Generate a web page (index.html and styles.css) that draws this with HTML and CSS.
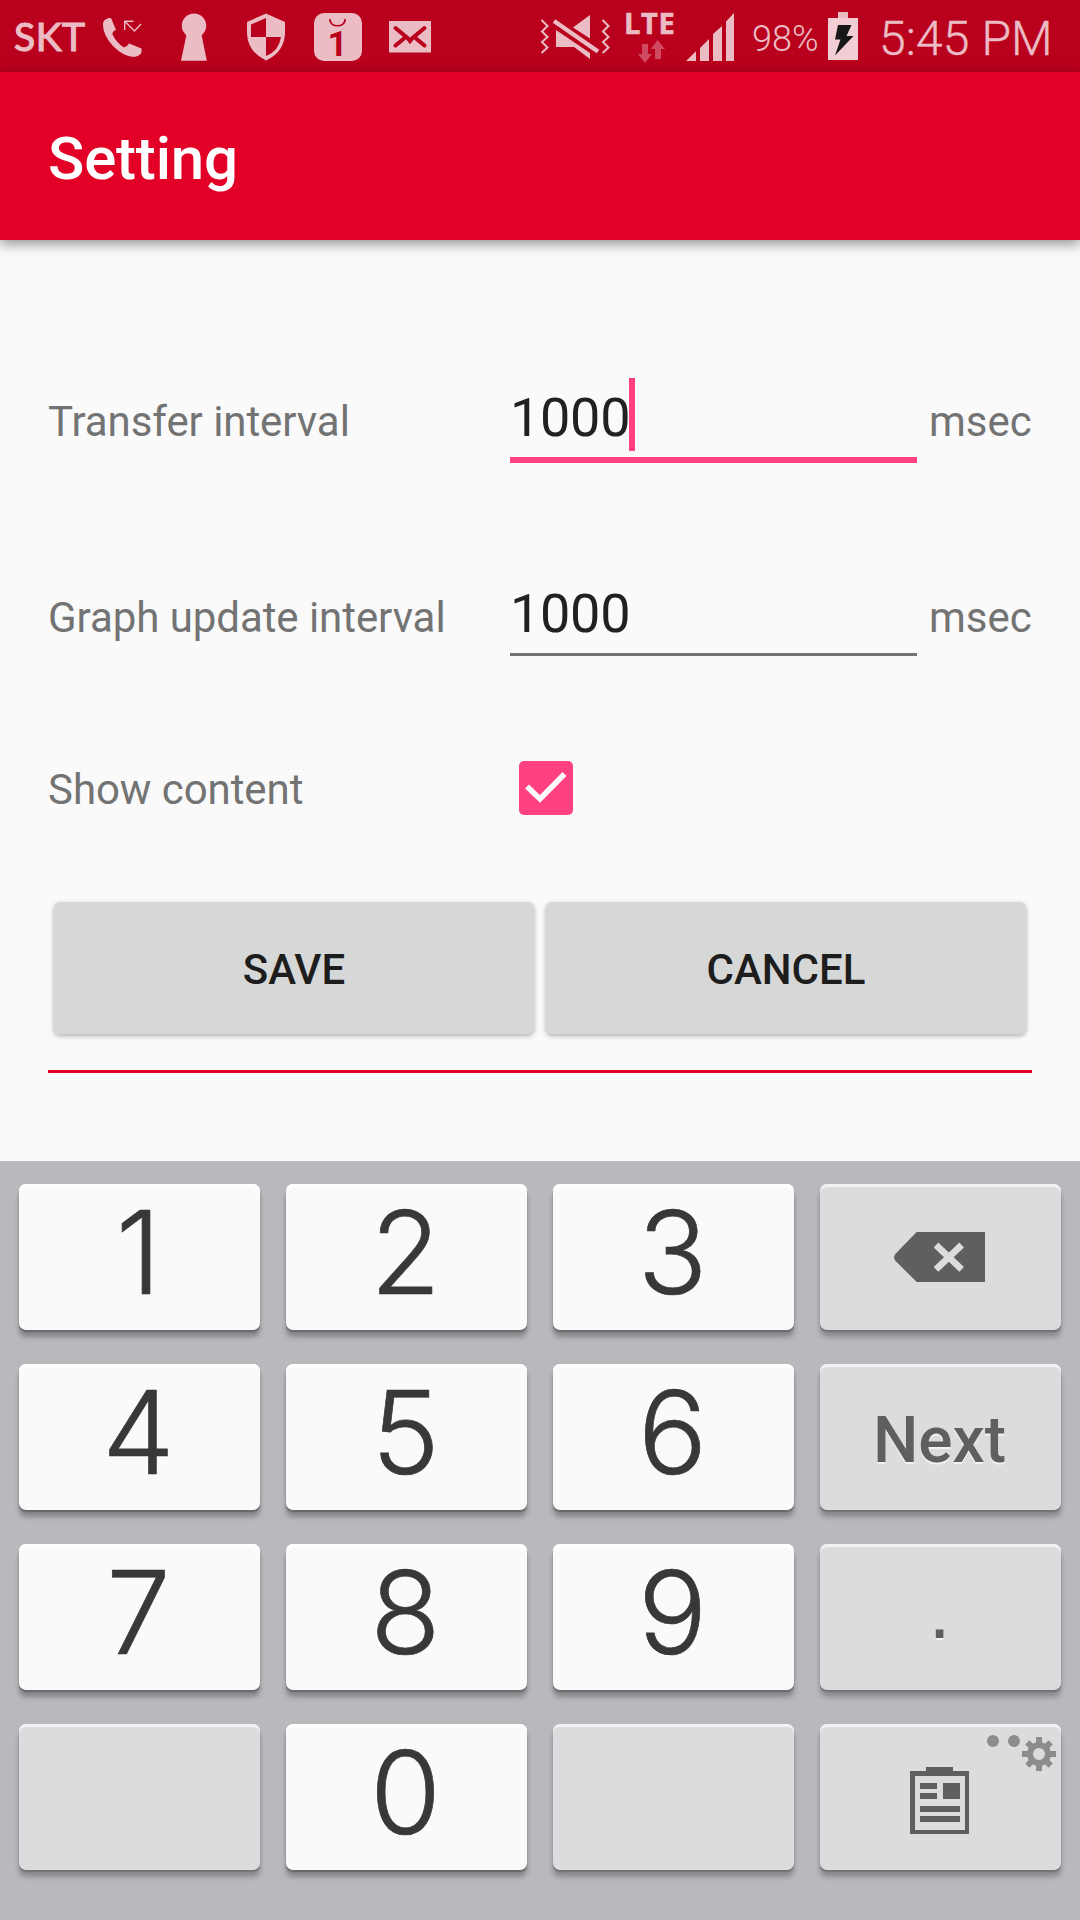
FILE: index.html
```html
<!DOCTYPE html>
<html lang="en">
<head>
<meta charset="utf-8">
<title>Setting</title>
<link rel="stylesheet" href="styles.css">
</head>
<body>
<div class="screen">
  <header class="status">
    <span class="carrier">SKT</span>
    <svg class="ic" width="60" height="72" viewBox="100 0 60 72"><path fill="currentColor" d="M103 25C103 20 106 18 111 18L116 30Q112 31 112.500 34.500Q117 43.500 124 47.500Q127 47 129 43.500L141.500 48.500Q143 56 134 57Q124 57 113 46Q103 35 103 25Z"/><path d="M133.500 21.200H124.700V30M125 21.500L134.500 31L141 24" fill="none" stroke="currentColor" stroke-width="1.400"/></svg>
    <svg class="ic" width="70" height="72" viewBox="160 0 70 72"><circle cx="194" cy="25.700" r="12.200" fill="currentColor"/><path d="M187 32H201L206.800 60.700H181Z" fill="currentColor"/></svg>
    <svg class="ic" width="70" height="72" viewBox="230 0 70 72"><path d="M266 13.500L285 22V34Q284 52 266 60.500Q248 52 247 34V22Z" fill="currentColor"/><path class="cut" d="M251 24.500L266 18V37H251Z M266 37H281Q279 51 266 56Z"/></svg>
    <svg class="ic" width="80" height="72" viewBox="300 0 80 72"><rect x="314" y="13" width="48" height="48" rx="10" fill="currentColor"/><path class="cutline" stroke-width="1.600" d="M330 19C329 28 346 28 345 19"/><text class="day" x="327.500" y="56">1</text></svg>
    <svg class="ic" width="60" height="72" viewBox="380 0 60 72"><path d="M389 21H431V52.500H389Z" fill="currentColor"/><path class="cutline" stroke-width="4" stroke-linecap="round" d="M395.500 28L408 38.500L410 41L412 38.500L424.500 28M395.500 45.500L404 38.500M424.500 45.500L416 38.500"/></svg>
    <svg class="ic mute" width="80" height="72" viewBox="535 0 80 72"><path fill="none" stroke="currentColor" stroke-width="2" d="M541.500 20L547.500 26L542 31.500L547.500 37L542 42L547.500 47.500L541.500 53M602.500 20L608.500 26L603 31.500L608.500 37L603 42L608.500 47.500L602.500 53"/><path fill="currentColor" d="M573 27.500L590 15V38.500ZM556 30L590 53V59L574 47H556Z"/><path stroke="currentColor" stroke-width="4.500" d="M554 21L598 51.500"/></svg>
    <div class="network">
      <span class="lte">LTE</span>
      <svg width="30" height="24" viewBox="636 39 30 24"><path d="M642 44H648V54H652L645 63L638 54H642ZM655 59V49H651L657.500 40L665 49H661V59Z" fill="#cf4a60"/></svg>
    </div>
    <svg class="ic" width="68" height="72" viewBox="682 0 68 72"><path fill="currentColor" d="M686 61L696 51.300V61ZM700 61V48L709 39V61ZM713 61V34L722 26V61ZM726 61V21.500L734 13V61Z"/></svg>
    <span class="percent">98%</span>
    <svg class="ic" width="55" height="72" viewBox="822 0 55 72"><path d="M838 12H848V18H838Z" fill="currentColor"/><path d="M828 18H858V60H828Z" fill="#f2ced4"/><path d="M838 25H851.500L846.500 36H853.500L835 55.500L840.500 39.500H835Z" fill="#171717"/></svg>
    <span class="clock">5:45 PM</span>
  </header>
  <div class="appbar"><h1 class="title">Setting</h1></div>
  <main class="form">
    <div class="row">
      <label class="label">Transfer interval</label>
      <div class="field focused"><span>1000</span><i class="caret"></i></div>
      <span class="unit">msec</span>
    </div>
    <div class="row">
      <label class="label">Graph update interval</label>
      <div class="field"><span>1000</span></div>
      <span class="unit">msec</span>
    </div>
    <div class="row check-row">
      <label class="label">Show content</label>
      <span class="checkbox"><svg width="54" height="54" viewBox="0 0 54 54"><path d="M8 25.500L21 38L45.500 13" fill="none" stroke="#fafafa" stroke-width="5.500"/></svg></span>
    </div>
    <div class="buttons">
      <button class="btn">SAVE</button>
      <button class="btn">CANCEL</button>
    </div>
    <hr class="rule">
  </main>
  <div class="keyboard">
    <div class="key"><span class="digit">1</span></div><div class="key"><span class="digit">2</span></div><div class="key"><span class="digit">3</span></div>
    <div class="key alt"><svg width="241" height="146" viewBox="0 0 723 438"><path d="M290 144H495V294H290L226 230Q219 220 226 210Z" fill="#5f5f5f"/><path d="M348 183L425 256M425 183L348 256" stroke="#dbdcde" stroke-width="20"/></svg></div>
    <div class="key"><span class="digit">4</span></div><div class="key"><span class="digit">5</span></div><div class="key"><span class="digit">6</span></div>
    <div class="key alt next">Next</div>
    <div class="key"><span class="digit">7</span></div><div class="key"><span class="digit">8</span></div><div class="key"><span class="digit">9</span></div>
    <div class="key alt dot">.</div>
    <div class="key alt"></div><div class="key"><span class="digit">0</span></div><div class="key alt"></div>
    <div class="key alt"><svg width="241" height="146" viewBox="0 0 723 438"><path fill="#5f5f5f" fill-rule="evenodd" d="M318 129H399V141H447V330H270V141H318ZM285 156V318H435V156Z"/><path fill="#5f5f5f" d="M300 177H351V195H300ZM300 207H351V225H300ZM369 177H420V225H369ZM300 246H420V264H300ZM300 276H420V294H300Z"/><g fill="#8c8c8c"><circle cx="519" cy="51" r="18"/><circle cx="582" cy="51" r="18"/></g><g transform="translate(657 90)" stroke="#8c8c8c" fill="none"><circle r="27" stroke-width="18"/><path stroke-width="18" d="M0-51V-30M0 51V30M-51 0H-30M51 0H30M-35-35L-22-22M35 35L22 22M-35 35L-22 22M35-35L22-22"/></g></svg></div>
  </div>
</div>
</body>
</html>
```
FILE: styles.css
```css
* { box-sizing: border-box; }
body { margin: 0; font-family: Roboto, "Liberation Sans", sans-serif; background: #fafafa; }
.screen { width: 1080px; height: 1920px; display: flex; flex-direction: column; overflow: hidden; }

.status { height: 72px; flex: none; display: flex; background: #b9001c; color: #ecbcc4; white-space: nowrap; }
.ic { flex: none; display: block; }
.cut { fill: #b9001c; }
.cutline { fill: none; stroke: #b9001c; }
.day { font: 700 35px Roboto, sans-serif; fill: #b9001c; }
.carrier { width: 100px; padding-left: 14px; font: 400 39px/73px Lato, sans-serif; letter-spacing: .5px; -webkit-text-stroke: 1.2px #ecbcc4; }
.mute { margin-left: 95px; }
.network { width: 67px; padding: 8px 0 0 9px; display: flex; flex-direction: column; }
.network svg { margin: 2px 0 0 12px; display: block; }
.lte { font: 700 29px/29px "Open Sans", sans-serif; letter-spacing: .6px; -webkit-text-stroke: .6px #ecbcc4; }
.percent { width: 72px; padding-left: 2px; font-size: 36px; font-weight: 300; line-height: 78px; }
.clock { padding-left: 2px; font-size: 48px; font-weight: 300; line-height: 77px; letter-spacing: .15px; -webkit-text-stroke: .4px #ecbcc4; }

.appbar { height: 168px; flex: none; padding: 2px 48px 0; background: #e20027; box-shadow: 0 4px 12px rgba(0, 0, 0, .42); }
.title { margin: 0; color: #fff; font-size: 60px; font-weight: 500; line-height: 169px; letter-spacing: -.2px; }

.form { height: 921px; flex: none; padding: 138px 48px 0; display: flex; flex-direction: column; }
.row { height: 85px; flex: none; margin-bottom: 111px; display: flex; color: #737373; font-size: 42px; line-height: 87px; }
.label { width: 462px; flex: none; letter-spacing: -.06px; }
.field { width: 407px; height: 82px; margin-right: 12px; border-bottom: 3px solid #737373; display: flex; align-items: flex-start; color: #212121; font-size: 54px; line-height: 79px; letter-spacing: -.3px; }
.field.focused { height: 85px; border-bottom: 6px solid #ff4081; }
.caret { width: 6px; height: 73px; margin-left: -1px; background: #ff4081; }
.check-row { height: 54px; margin: -9px 0 87px; line-height: 58px; }
.checkbox { width: 54px; height: 54px; margin-left: 9px; border-radius: 5px; background: #ff4081; }
.checkbox svg { display: block; }
.buttons { display: flex; gap: 12px; padding: 0 6px; }
.btn { flex: 1; height: 132px; padding: 3px 0 0; border: 0; border-radius: 6px; background: #d6d7d7; color: #1d1d1d; font: 500 42px Roboto, sans-serif; box-shadow: 0 2px 5px rgba(0, 0, 0, .3); }
.rule { width: 984px; height: 3px; margin: 36px 0 0; border: 0; background: #e20027; }

.keyboard { flex: 1; padding: 23px 19px 0; display: grid; grid-template-columns: repeat(4, 241px); grid-auto-rows: 146px; gap: 34px 26px; background: #b8b9bd; }
.key { border-radius: 7px; background: #fafafa; color: #383838; text-align: center; box-shadow: inset 0 3px 1px #fff, 0 2px 1px #68696b, 0 7px 5px rgba(0, 0, 0, .28); }
.digit { display: block; padding-right: 2px; font: 300 115px/138px Inter, Roboto, sans-serif; -webkit-text-stroke: .7px #383838; }
.key svg { display: block; }
.key.alt { background: #dbdcde; color: #5f5f5f; box-shadow: inset 0 3px 1px #f1f2f2, 0 2px 1px #737476, 0 7px 5px rgba(0, 0, 0, .25); }
.key.next { padding-right: 2px; font-size: 64px; font-weight: 500; line-height: 153px; text-shadow: 0 2px 1px #f4f4f4; }
.key.dot { padding-right: 2px; font: 400 80px/134px "Liberation Sans", sans-serif; text-shadow: 0 2px 1px #f4f4f4; }
```
